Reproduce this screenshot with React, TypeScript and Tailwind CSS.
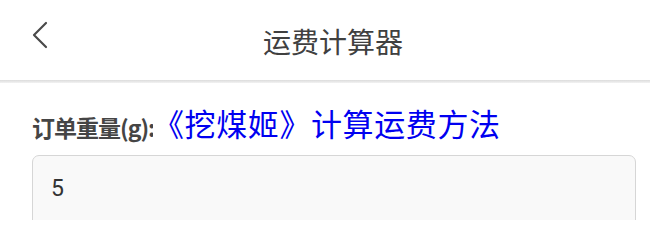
import React from "react";

const CJK = { fontFamily: '"Noto Sans CJK SC", "Noto Sans", sans-serif' };

function BackIcon() {
  return (
    <svg width="18" height="28" viewBox="0 0 18 28" fill="none" aria-hidden="true">
      <path d="M15 2 L3 14 L15 26" stroke="#4a4a4a" strokeWidth="2.2" strokeLinecap="round" strokeLinejoin="round" />
    </svg>
  );
}

export default function App() {
  return (
    <div className="h-[220px] w-[650px] overflow-hidden bg-white" style={CJK}>
      {/* top bar */}
      <div className="relative flex h-[80px] items-center justify-center bg-white pl-[16px] pt-[2px]">
        <button className="absolute left-[31px] top-[21px] flex items-center">
          <BackIcon />
        </button>
        <span className="text-[28px] leading-none text-[#404040]">运费计算器</span>
      </div>
      <div className="h-[3px] bg-gradient-to-b from-[#dcdcdc] to-[#f2f2f2]" />

      <div className="pl-[32px] pr-[14px] pt-[21px]">
        <div className="relative h-[46px]">
          <span className="text-[23px] font-bold leading-[46px] tracking-[-1px] text-[#454545]">订单重量(g):</span>
          {/* watermark caption laid over the label */}
          <span className="absolute left-[121px] top-[-4px] bg-white text-[31px] leading-[46px] tracking-[0.6px] text-[#0000f0]">
            《挖煤姬》计算运费方法
          </span>
        </div>
        <div className="mt-[5px] flex h-[80px] items-start rounded-[7px] border border-[#d6d6d6] bg-[#f9f9f9] px-[18px] pt-[21px]">
          <span className="text-[23px] leading-none text-[#333]" style={{ fontFamily: "Roboto, sans-serif" }}>5</span>
        </div>
      </div>
    </div>
  );
}
